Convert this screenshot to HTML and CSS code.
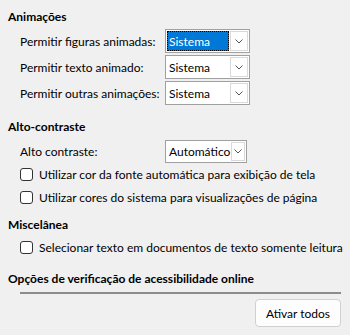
FILE: index.html
```html
<!DOCTYPE html>
<html lang="pt">
<head>
    <meta charset="UTF-8">
    <title>Acessibilidade</title>
    <link rel="stylesheet" href="styles.css">
</head>
<body>
    <div class="section animations">
        <h2>Animações</h2>
        <div class="form-row">
            <span class="label">Permitir figuras animadas:</span>
            <div class="combo focused">
                <span class="combo-text">Sistema</span>
                <span class="combo-btn"><svg width="8" height="5" viewBox="0 0 8 5"><path d="M0.5 0.5 L4 4 L7.5 0.5" fill="none" stroke="#555" stroke-width="1"/></svg></span>
            </div>
        </div>
        <div class="form-row">
            <span class="label">Permitir texto animado:</span>
            <div class="combo">
                <span class="combo-text">Sistema</span>
                <span class="combo-btn"><svg width="8" height="5" viewBox="0 0 8 5"><path d="M0.5 0.5 L4 4 L7.5 0.5" fill="none" stroke="#555" stroke-width="1"/></svg></span>
            </div>
        </div>
        <div class="form-row">
            <span class="label">Permitir outras animações:</span>
            <div class="combo">
                <span class="combo-text">Sistema</span>
                <span class="combo-btn"><svg width="8" height="5" viewBox="0 0 8 5"><path d="M0.5 0.5 L4 4 L7.5 0.5" fill="none" stroke="#555" stroke-width="1"/></svg></span>
            </div>
        </div>
    </div>

    <div class="section contrast">
        <h2>Alto-contraste</h2>
        <div class="form-row">
            <span class="label">Alto contraste:</span>
            <div class="combo narrow">
                <span class="combo-text">Automático</span>
                <span class="combo-btn"><svg width="8" height="5" viewBox="0 0 8 5"><path d="M0.5 0.5 L4 4 L7.5 0.5" fill="none" stroke="#555" stroke-width="1"/></svg></span>
            </div>
        </div>
        <label class="check"><span class="box"></span>Utilizar cor da fonte automática para exibição de tela</label>
        <label class="check"><span class="box"></span>Utilizar cores do sistema para visualizações de página</label>
    </div>

    <div class="section misc">
        <h2>Miscelânea</h2>
        <label class="check"><span class="box"></span>Selecionar texto em documentos de texto somente leitura</label>
    </div>

    <div class="section online">
        <h2>Opções de verificação de acessibilidade online</h2>
        <div class="separator"></div>
        <div class="actions">
            <button class="btn">Ativar todos</button>
        </div>
    </div>
</body>
</html>
```

FILE: styles.css
```css
body {
    margin: 0;
    padding: 10px 9px 0 8px;
    background: #f0f0f0;
    font-family: "Lato", "Noto Sans", sans-serif;
    font-size: 12px;
    color: #000;
}

h2 {
    margin: 0;
    font-size: 12px;
    font-weight: bold;
    line-height: 14px;
}

.animations {
    margin-bottom: 15px;
}

.contrast {
    margin-bottom: 9px;
}

.misc {
    margin-bottom: 13px;
}

.form-row {
    display: flex;
    align-items: center;
    padding-left: 12px;
    margin-top: 2px;
}

.section h2 + .form-row {
    margin-top: 5px;
}

.contrast h2 + .form-row {
    margin-top: 6px;
}

.label {
    width: 145px;
}

.combo {
    display: flex;
    width: 85px;
    height: 24px;
    box-sizing: border-box;
    border: 1px solid #a0a0a0;
    background: #fff;
}

.combo.narrow {
    width: 82px;
    height: 23px;
}

.combo-text {
    flex: 1;
    display: flex;
    align-items: center;
    padding-left: 2px;
    margin: 1px;
}

.combo.focused .combo-text {
    background: #0078d7;
    color: #fff;
    outline: 1px dotted #000;
    outline-offset: -1px;
}

.combo-btn {
    width: 16px;
    display: flex;
    align-items: center;
    justify-content: center;
    border: 1px solid #d9d9d9;
    margin: 1px 1px 1px 0;
}

.check {
    display: flex;
    align-items: center;
    padding-left: 12px;
    height: 23px;
    white-space: nowrap;
}

.section h2 + .check {
    margin-top: 4px;
}

.box {
    flex: none;
    width: 11px;
    height: 11px;
    border: 1px solid #333;
    border-radius: 3px;
    background: #fff;
    margin-right: 6px;
}

.separator {
    margin: 6px 0 0 12px;
    height: 2px;
    background: #8c8c8c;
}

.actions {
    display: flex;
    justify-content: flex-end;
    margin-top: 5px;
}

.btn {
    font-family: inherit;
    font-size: 12px;
    width: 86px;
    height: 28px;
    background: #fdfdfd;
    border: 1px solid #d0d0d0;
    border-radius: 4px;
    color: #000;
}
```
